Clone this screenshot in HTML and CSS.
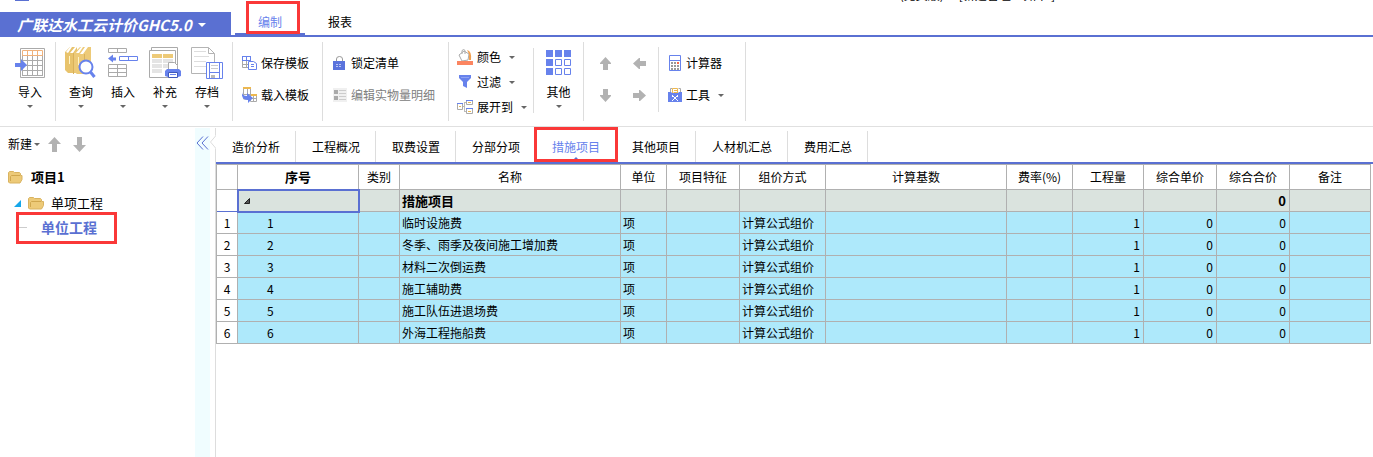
FILE: index.html
```html
<!DOCTYPE html>
<html lang="zh-CN">
<head>
    <meta charset="UTF-8">
    <meta name="viewport" content="width=device-width, initial-scale=1.0">
    <title>广联达水工云计价GHC5.0</title>
    <link rel="stylesheet" href="styles.css">
</head>
<body>
    <header class="titlebar">
        <span class="quick-access"></span>
        <span class="window-title"><span>(免费版)</span><span>- [新建管理 - 项目1]</span></span>
    </header>

    <nav class="menubar">
        <button class="brand">广联达水工云计价GHC5.0<span class="caret caret-white"></span></button>
        <button class="menu-tab active marked">编制</button>
        <button class="menu-tab">报表</button>
    </nav>

    <div class="ribbon">
        <div class="group group-import">
            <button class="big-button">
                <svg width="32" height="32" viewBox="0 0 32 32">
                    <path d="M6.500 1.500h24v29h-24z" fill="#fff" stroke="#aaa"/>
                    <path d="M8.500 8.500h20M8.500 13.500h20M8.500 18.500h20M8.500 23.500h20M8.500 28.500h20M8.500 8v21M13.500 8v21M18.500 8v21M23.500 8v21M28.500 8v21" stroke="#aaa" fill="none"/>
                    <path d="M8.500 3.500h20v5h-20zM13.500 3v6M18.500 3v6M23.500 3v6" stroke="#f0b27c" fill="none"/>
                    <path d="M1 16h6v-4l6 6-6 6v-4H1z" fill="#6782ec"/>
                </svg>
                <span>导入</span>
                <span class="caret"></span>
            </button>
        </div>

        <div class="group group-edit">
            <button class="big-button">
                <svg width="32" height="32" viewBox="0 0 32 32">
                    <path d="M0 5l5-5h7v26H3l-3-3z" fill="#e8c36c"/>
                    <path d="M9 6l6-6h11v24l-5 3h-9l-3-2z" fill="#edca78"/>
                    <path d="M1 5l4-5h2L3 6zM5 6l5-6h2L8 6zM11 6l5-6h2l-4 6zM15 7l5-7h3l-5 7z" fill="#fff"/>
                    <path d="M8.500 6v21M19.500 7v19" stroke="#d9b15a"/>
                    <path d="M4.500 9v8M13.500 10v8" stroke="#fff3c6"/>
                    <circle cx="21" cy="20" r="6.500" fill="#fff" stroke="#6782ec" stroke-width="2"/>
                    <path d="M25.500 25l4 5" stroke="#6782ec" stroke-width="3"/>
                </svg>
                <span>查询</span>
                <span class="caret"></span>
            </button>
            <button class="big-button">
                <svg width="32" height="32" viewBox="0 0 32 32" fill="#fff" stroke="#aaa">
                    <path d="M1.500 1.500h18v4h-18zM10.500 1.500v4"/>
                    <path d="M1.500 17.500h18v12h-18zM1.500 21.500h18M1.500 25.500h18M10.500 17.500v12"/>
                    <path d="M12.500 9.500h18v4h-18zM21.500 9.500v4" stroke="#6782ec"/>
                    <path d="M1 11.500l5-4v3h3v3H6v2z" fill="#6782ec" stroke="none"/>
                </svg>
                <span>插入</span>
                <span class="caret"></span>
            </button>
            <button class="big-button">
                <svg width="32" height="32" viewBox="0 0 32 32">
                    <path d="M2.500 3V.5h26v20M.5 3.500h26v27H.5z" fill="#fff" stroke="#aaa"/>
                    <path d="M3 7h10v4H3zM14 7h10v4H14z" fill="#edca78"/>
                    <path d="M3 12h10v4H3zM14 12h10v4H14zM3 17h10v4H3zM14 17h10v4H14zM3 22h10v4H3z" fill="#e4e4e4"/>
                    <path d="M19.500 23v-7.500h6l3 3V23" fill="#fff" stroke="#aaa"/>
                    <path d="M18 22h12l2 2v5l-3 1H19l-3-1v-5z" fill="#6782ec"/>
                    <path d="M19.500 25.500h9v5h-9z" fill="#fff" stroke="#4059ba"/>
                    <path d="M21 27.500h6" stroke="#6782ec"/>
                </svg>
                <span>补充</span>
                <span class="caret"></span>
            </button>
            <button class="big-button">
                <svg width="32" height="32" viewBox="0 0 32 32">
                    <path d="M.5.5h17l6 6v20H.5zM17.500.5v6h6" fill="#fff" stroke="#b4b4b4"/>
                    <path d="M3 4.500h12M3 9.500h15M3 14.500h12M3 19.500h12" stroke="#ddd"/>
                    <path d="M15.500 15.500h16v16h-16z" fill="#fff" stroke="#6782ec"/>
                    <path d="M18.500 15v16M28.500 15v16M19 25.500h9" stroke="#6782ec"/>
                    <path d="M20 18.500h7M20 21.500h7" stroke="#ccc"/>
                    <path d="M20 28h4v3h-4z" fill="#bbb"/>
                </svg>
                <span>存档</span>
                <span class="caret"></span>
            </button>
        </div>

        <div class="group group-rows">
            <button class="row-button">
                <svg width="15" height="16" viewBox="0 0 15 16" fill="#fff">
                    <path d="M.5 1.500h8v11h-8zM.5 5.500h8M.5 9.500h8M4.500 1.500v11" stroke="#a7a7a7"/>
                    <path d="M0 1.500h9M4.500 1v4M8.500 1v4M.5 1v4M0 5.500h9" stroke="#6782ec"/>
                    <path d="M6.500 6.500h5l3 2v6h-8z" stroke="#6782ec"/>
                    <path d="M9 9.500h3M9 11.500h3" stroke="#6782ec"/>
                </svg>
                <span>保存模板</span>
            </button>
            <button class="row-button">
                <svg width="15" height="16" viewBox="0 0 15 16">
                    <path d="M1.500 2v10h7V2M5.500 2v10M1 7.500h8M8.500 8v6.500h6V8M11.500 8v7M8 11.500h7" fill="none" stroke="#aaa"/>
                    <path d="M1 0h8v2H1zM9 7h6v2H9z" fill="#edb850"/>
                    <path d="M0 5q0 4 5 4V6l6 5-5 5v-3Q-1 13 0 5z" fill="#6782ec"/>
                </svg>
                <span>载入模板</span>
            </button>
        </div>

        <div class="group group-rows group-list">
            <button class="row-button">
                <svg width="14" height="16" viewBox="0 0 14 16">
                    <path d="M3.500 7V4q0-2.500 3-2.500T9.500 4v3" fill="none" stroke="#999"/>
                    <path d="M0 6h12v9H0z" fill="#5a73dc"/>
                    <path d="M3 9.500h6M3 11.500h6" stroke="#b9c4f3" stroke-dasharray="2 1"/>
                </svg>
                <span>锁定清单</span>
            </button>
            <button class="row-button" disabled>
                <svg width="14" height="16" viewBox="0 0 14 16">
                    <path d="M0 1h14v14H0z" fill="#f0f0f0"/>
                    <path d="M1 3h4v4H1zM1 9h4v4H1z" fill="#aaa"/>
                    <path d="M6 3.500h7M6 6.500h7M6 9.500h7M6 12.500h7" stroke="#ccc"/>
                </svg>
                <span>编辑实物量明细</span>
            </button>
        </div>

        <div class="group group-view">
            <div class="view-rows">
                <button class="row-button">
                    <svg width="16" height="16" viewBox="0 0 16 16">
                        <path d="M2 6l5-4 5 3-1 6-6 1zM5 5V1.500q2-2 3 0V5" fill="#fff" stroke="#aaa"/>
                        <path d="M10 1q5 1 4 10h-2V5z" fill="#f2a050"/>
                        <path d="M0 12h16v4H0z" fill="#fb8561"/>
                    </svg>
                    <span>颜色</span>
                    <span class="caret"></span>
                </button>
                <button class="row-button">
                    <svg width="16" height="16" viewBox="0 0 16 16">
                        <path d="M2 1h12v3l-4 4v6l-4-2V8L2 4z" fill="#6782ec"/>
                        <path d="M4 3.500h8" stroke="#8ea1f1"/>
                    </svg>
                    <span>过滤</span>
                    <span class="caret"></span>
                </button>
                <button class="row-button">
                    <svg width="16" height="16" viewBox="0 0 16 16" fill="#fff">
                        <path d="M5 7.500h3M7.500 3v10M7 3.500h2M7 12.500h2" stroke="#bbb"/>
                        <path d="M.5 4.500h5v6h-5zM9.500 1.500h6v4h-6zM9.500 9.500h6v5h-6z" stroke="#aaa"/>
                        <path d="M0 4.500h6M9 1.500h7M9 9.500h7" stroke="#6782ec"/>
                        <path d="M2 7.500h2M11 3.500h3M11 12.500h3" stroke="#edb850"/>
                    </svg>
                    <span>展开到</span>
                    <span class="caret"></span>
                </button>
            </div>
            <button class="big-button other-button">
                <svg width="25" height="32" viewBox="0 0 25 32">
                    <path d="M0 3h7v7H0zM9 3h7v7H9zM18 3h7v7h-7zM0 12h7v7H0zM0 21h7v7H0z" fill="#6782ec"/>
                    <path d="M9.500 12.500h6v6h-6zM18.500 12.500h6v6h-6zM9.500 21.500h6v6h-6zM18.500 21.500h6v6h-6z" fill="#fff" stroke="#6782ec"/>
                </svg>
                <span>其他</span>
                <span class="caret"></span>
            </button>
        </div>

        <div class="group group-move">
            <div class="move-grid">
                <button aria-label="上移"><svg width="13" height="13" viewBox="0 0 13 13"><path d="M6.500 0L12 6v1H9v6H4V7H1V6z"/></svg></button>
                <button aria-label="升级"><svg width="13" height="13" viewBox="0 0 13 13"><path d="M0 6.500L6 1h1v3h6v5H7v3H6z"/></svg></button>
                <button aria-label="下移"><svg width="13" height="13" viewBox="0 0 13 13"><path d="M6.500 13L12 7V6H9V0H4v6H1v1z"/></svg></button>
                <button aria-label="降级"><svg width="13" height="13" viewBox="0 0 13 13"><path d="M13 6.500L7 1H6v3H0v5h6v3h1z"/></svg></button>
            </div>
            <div class="tools">
                <button class="row-button">
                    <svg width="14" height="16" viewBox="0 0 14 16">
                        <path d="M1.500.5h11v15h-11zM1.500 5.500h11" fill="#fff" stroke="#6782ec"/>
                        <path d="M3 8h8M3 11h8M3 14h8" stroke="#999" stroke-width="2" stroke-dasharray="2 1"/>
                        <path d="M9 7h2v2H9z" fill="#f9694c"/>
                    </svg>
                    <span>计算器</span>
                </button>
                <button class="row-button">
                    <svg width="14" height="16" viewBox="0 0 14 16">
                        <path d="M2.500 6V1.500h2M12.500 6V1.500h-2" fill="none" stroke="#aaa"/>
                        <path d="M4.500 1.500h5V6h-5z" fill="#fff" stroke="#edb850"/>
                        <path d="M6 3.500h3M6 5.500h3" stroke="#edb850"/>
                        <path d="M0 5h3l1 1h6l1-1h3v10H0z" fill="#6782ec"/>
                        <path d="M4 8l6 6M10 8l-6 6" stroke="#fff"/>
                        <path d="M4 8h1v2H4zM9 8h1v2H9z" fill="#fff"/>
                    </svg>
                    <span>工具</span>
                    <span class="caret"></span>
                </button>
            </div>
        </div>
    </div>

    <div class="workspace">
        <aside class="sidebar">
            <div class="tree-toolbar">
                <button class="new-button">新建<span class="caret"></span></button>
                <button aria-label="上移"><svg width="13" height="15" viewBox="0 0 13 15"><path d="M6.500 0L13 7H9v8H4V7H0z"/></svg></button>
                <button aria-label="下移"><svg width="13" height="15" viewBox="0 0 13 15"><path d="M6.500 15L13 8H9V0H4v8H0z"/></svg></button>
            </div>
            <ul class="tree">
                <li class="tree-project">
                    <svg width="15" height="13" viewBox="0 0 15 13">
                        <path d="M.5 1.500l1-1h4l1 1h5l1 1v2h1.500v4l-2 3.500H1.500l-1-1z" fill="#edca78" stroke="#d9b360"/>
                        <path d="M2.500 10V5.500l1-1H12" fill="none" stroke="#d0a74e"/>
                    </svg>
                    <span>项目1</span>
                </li>
                <li class="tree-section">
                    <svg width="7" height="7" viewBox="0 0 7 7"><path d="M7 0v7H0z" fill="#16a7ea"/></svg>
                    <svg width="16" height="13" viewBox="0 0 16 13">
                        <path d="M.5 1.500l1-1h4l1 1h6l1 1v2h2v4l-2 3.500H1.500l-1-1z" fill="#edca78" stroke="#d9b360"/>
                        <path d="M2.500 10V5.500l1-1H13" fill="none" stroke="#d0a74e"/>
                    </svg>
                    <span>单项工程</span>
                </li>
                <li class="tree-unit marked"><span>单位工程</span></li>
            </ul>
        </aside>
        <button class="collapse" aria-label="收起">
            <svg width="13" height="14" viewBox="0 0 13 14"><path d="M7 .5L1 7l6 6.500M12 .5L6 7l6 6.500" fill="none" stroke="#5a70d2"/></svg>
        </button>
        <svg class="notch" width="6" height="14" viewBox="0 0 6 14"><path d="M6 0v14L.5 7z" fill="#fff"/><path d="M6 .5L.5 7 6 13.500" fill="none" stroke="#ddd"/></svg>

        <main class="content">
            <div class="tabs">
                <button class="tab">造价分析</button>
                <button class="tab">工程概况</button>
                <button class="tab">取费设置</button>
                <button class="tab">分部分项</button>
                <button class="tab active marked">措施项目</button>
                <button class="tab">其他项目</button>
                <button class="tab">人材机汇总</button>
                <button class="tab">费用汇总</button>
            </div>
            <table class="grid">
                <colgroup>
                    <col class="col-index"><col class="col-no"><col class="col-kind"><col class="col-name"><col class="col-unit">
                    <col class="col-feature"><col class="col-method"><col class="col-base"><col class="col-rate">
                    <col class="col-qty"><col class="col-price"><col class="col-price"><col class="col-note">
                </colgroup>
                <thead>
                    <tr>
                        <th></th>
                        <th class="current">序号</th>
                        <th>类别</th>
                        <th>名称</th>
                        <th>单位</th>
                        <th>项目特征</th>
                        <th>组价方式</th>
                        <th>计算基数</th>
                        <th>费率(%)</th>
                        <th>工程量</th>
                        <th>综合单价</th>
                        <th>综合合价</th>
                        <th>备注</th>
                    </tr>
                </thead>
                <tbody>
                    <tr class="summary">
                        <td class="index"></td>
                        <td class="selected"><svg width="6" height="6" viewBox="0 0 6 6"><path d="M5.500 .5v5h-5z" fill="#555" stroke="#222"/></svg></td>
                        <td></td><td>措施项目</td><td></td><td></td><td></td><td></td><td></td><td></td><td></td><td class="num">0</td><td></td>
                    </tr>
                    <tr>
                        <td class="index">1</td><td class="no">1</td><td></td><td>临时设施费</td><td>项</td><td></td><td>计算公式组价</td><td></td><td></td><td class="num">1</td><td class="num">0</td><td class="num">0</td><td></td>
                    </tr>
                    <tr>
                        <td class="index">2</td><td class="no">2</td><td></td><td>冬季、雨季及夜间施工增加费</td><td>项</td><td></td><td>计算公式组价</td><td></td><td></td><td class="num">1</td><td class="num">0</td><td class="num">0</td><td></td>
                    </tr>
                    <tr>
                        <td class="index">3</td><td class="no">3</td><td></td><td>材料二次倒运费</td><td>项</td><td></td><td>计算公式组价</td><td></td><td></td><td class="num">1</td><td class="num">0</td><td class="num">0</td><td></td>
                    </tr>
                    <tr>
                        <td class="index">4</td><td class="no">4</td><td></td><td>施工辅助费</td><td>项</td><td></td><td>计算公式组价</td><td></td><td></td><td class="num">1</td><td class="num">0</td><td class="num">0</td><td></td>
                    </tr>
                    <tr>
                        <td class="index">5</td><td class="no">5</td><td></td><td>施工队伍进退场费</td><td>项</td><td></td><td>计算公式组价</td><td></td><td></td><td class="num">1</td><td class="num">0</td><td class="num">0</td><td></td>
                    </tr>
                    <tr>
                        <td class="index">6</td><td class="no">6</td><td></td><td>外海工程拖船费</td><td>项</td><td></td><td>计算公式组价</td><td></td><td></td><td class="num">1</td><td class="num">0</td><td class="num">0</td><td></td>
                    </tr>
                </tbody>
            </table>
        </main>
    </div>
</body>
</html>
```
FILE: styles.css
```css
* {
    box-sizing: border-box;
}

body {
    display: flex;
    flex-direction: column;
    min-height: 100vh;
    margin: 0;
    background-color: #fff;
    color: #000;
    font: 12px/18px "Noto Sans CJK SC", sans-serif;
    white-space: nowrap;
}

button {
    margin: 0;
    padding: 0;
    border: none;
    background: none;
    color: inherit;
    font: inherit;
    cursor: pointer;
}

button:disabled {
    color: #808080;
    cursor: default;
}

svg {
    display: block;
    flex: none;
}

.caret {
    flex: none;
    width: 5px;
    border: solid transparent;
    border-width: 3px 3px 0;
    border-top-color: #666;
}

.caret-white {
    width: 8px;
    border-width: 4px 4px 0;
    border-top-color: #fff;
}

/* red frame drawn over the current item */
.marked {
    position: relative;
}

.marked::after {
    content: "";
    position: absolute;
    border: 3px solid #fa3838;
    pointer-events: none;
}

/* title bar and menu */
.titlebar {
    display: flex;
    height: 12px;
}

.quick-access {
    width: 14px;
    height: 1px;
    margin-left: 15px;
    background-color: #5a70d2;
}

.window-title {
    display: flex;
    align-items: flex-end;
    gap: 8px;
    height: 2px;
    margin: 0 318px 0 auto;
    overflow: hidden;
    line-height: 14px;
}

.menubar {
    display: flex;
    height: 25px;
    border-bottom: 2px solid #5a70d2;
}

.brand {
    display: flex;
    align-items: center;
    gap: 6px;
    width: 231px;
    height: 25px;
    padding-left: 17px;
    background-color: #5a70d2;
    color: #fff;
    font: italic bold 15px/24px "Noto Sans CJK SC", sans-serif;
}

.menu-tab {
    width: 70px;
    padding-bottom: 4px;
}

.brand + .menu-tab {
    margin-left: 4px;
}

.menu-tab.active {
    border-bottom: 2px solid #5a70d2;
    color: #6782ec;
    padding-bottom: 2px;
}

.menu-tab.marked::after {
    inset: -11px 5px -1px 11px;
}

/* ribbon */
.ribbon {
    display: flex;
    height: 90px;
    padding: 5px 0;
    border-bottom: 1px solid #e0e0e0;
}

.group {
    display: flex;
    border-right: 1px solid #ddd;
}

.big-button {
    display: flex;
    flex-direction: column;
    align-items: center;
    width: 42px;
    padding-top: 5px;
}

.big-button span:not(.caret) {
    margin: 4px 0;
}

.group-import {
    padding: 0 4px 0 9px;
}

.group-edit {
    padding: 0 4px;
}

.row-button {
    display: flex;
    align-items: center;
    gap: 4px;
}

.row-button .caret {
    margin-left: 4px;
}

.group-rows,
.tools {
    display: flex;
    flex-direction: column;
    gap: 14px;
    padding: 12px 12px 0 9px;
}

.group-rows {
    padding-right: 13px;
}

.group-list {
    padding-left: 10px;
}

.view-rows {
    display: flex;
    flex-direction: column;
    gap: 7px;
    width: 85px;
    margin: 6px 0 8px;
    padding-left: 8px;
    border-right: 1px solid #ddd;
}

.other-button {
    width: 49px;
}

.move-grid {
    display: grid;
    grid-template-columns: 34px 34px;
    grid-template-rows: 32px 32px;
    margin: 5px 0 9px;
    padding: 0 2px 0 4px;
    border-right: 1px solid #ddd;
}

.move-grid button {
    display: flex;
    align-items: center;
    justify-content: center;
}

.move-grid svg,
.tree-toolbar svg {
    fill: #b2b2b2;
}

.tools {
    padding-right: 21px;
}

/* project tree */
.workspace {
    display: flex;
    flex: 1;
    padding-top: 1px;
}

.sidebar {
    width: 195px;
}

.tree-toolbar {
    display: flex;
    align-items: center;
    gap: 12px;
    height: 32px;
    padding-left: 8px;
}

.new-button {
    display: flex;
    align-items: center;
    gap: 2px;
    margin-right: -4px;
}

.tree {
    margin: 3px 0 0;
    padding: 0;
    list-style: none;
}

.tree li {
    display: flex;
    align-items: center;
    height: 24px;
    font-size: 13px;
}

.tree .tree-project {
    gap: 8px;
    height: 28px;
    padding-left: 8px;
    font-weight: bold;
}

.tree-section {
    gap: 7px;
    padding-left: 14px;
}

.tree .tree-unit {
    gap: 14px;
    padding-left: 16px;
    color: #5a70d2;
    font-size: 14px;
    font-weight: bold;
}

.tree-unit::before {
    content: "";
    width: 11px;
    height: 1px;
    background-color: #ccc;
}

.tree-unit.marked::after {
    inset: -3px 78px -5px 16px;
}

.collapse {
    display: flex;
    justify-content: center;
    width: 15px;
    padding-top: 8px;
    background-color: #f0fdff;
}

/* pointer that breaks the left edge of the content area */
.notch {
    position: relative;
    margin: 7px -1px 0 0;
}

/* content tabs */
.content {
    flex: 1;
    min-width: 0;
    border-left: 1px solid #ddd;
}

.tabs {
    display: flex;
    height: 36px;
    padding-top: 3px;
    border-bottom: 2px solid #5a70d2;
}

.tab {
    padding: 0 15px 0 16px;
    border-right: 1px solid #ddd;
}

.tab.active {
    border-color: transparent;
    color: #6782ec;
}

.tab.active::before {
    content: "";
    position: absolute;
    bottom: 2px;
    left: 37px;
    border: solid transparent;
    border-width: 0 3px 3px;
    border-bottom-color: #5a70d2;
}

.tab.marked::after {
    inset: -4px -3px 0 -2px;
}

/* cost table */
.grid {
    width: calc(100% - 2px);
    table-layout: fixed;
    border: solid #b0b0b0;
    border-width: 1px 0 0 1px;
    border-collapse: separate;
    border-spacing: 0;
}

.col-index { width: 21px; }
.col-no { width: 121px; }
.col-kind { width: 41px; }
.col-name { width: 221px; }
.col-unit { width: 46px; }
.col-feature { width: 73px; }
.col-method { width: 86px; }
.col-base { width: 181px; }
.col-rate { width: 66px; }
.col-qty { width: 71px; }
.col-price { width: 73px; }
.col-note { width: 81px; }

.grid th,
.grid td {
    height: 22px;
    padding: 0 2px;
    border: solid #b0b0b0;
    border-width: 0 1px 1px 0;
    line-height: 20px;
}

.grid th {
    height: 25px;
    font-weight: normal;
}

.grid th.current,
.grid .summary td {
    font-size: 13px;
    font-weight: bold;
}

.grid td {
    background-color: #aee9fb;
}

.grid .summary td {
    background-color: #dae3de;
}

.grid td.index,
.grid .summary .index {
    padding: 0;
    background-color: #fff;
    text-align: center;
}

.grid .summary .index {
    border-color: #5a70d2;
}

.grid .selected {
    padding-left: 6px;
    outline: 2px solid #5a70d2;
    outline-offset: -1px;
}

.grid .no {
    padding-left: 29px;
}

.grid .num {
    padding-right: 3px;
    text-align: right;
}
```
